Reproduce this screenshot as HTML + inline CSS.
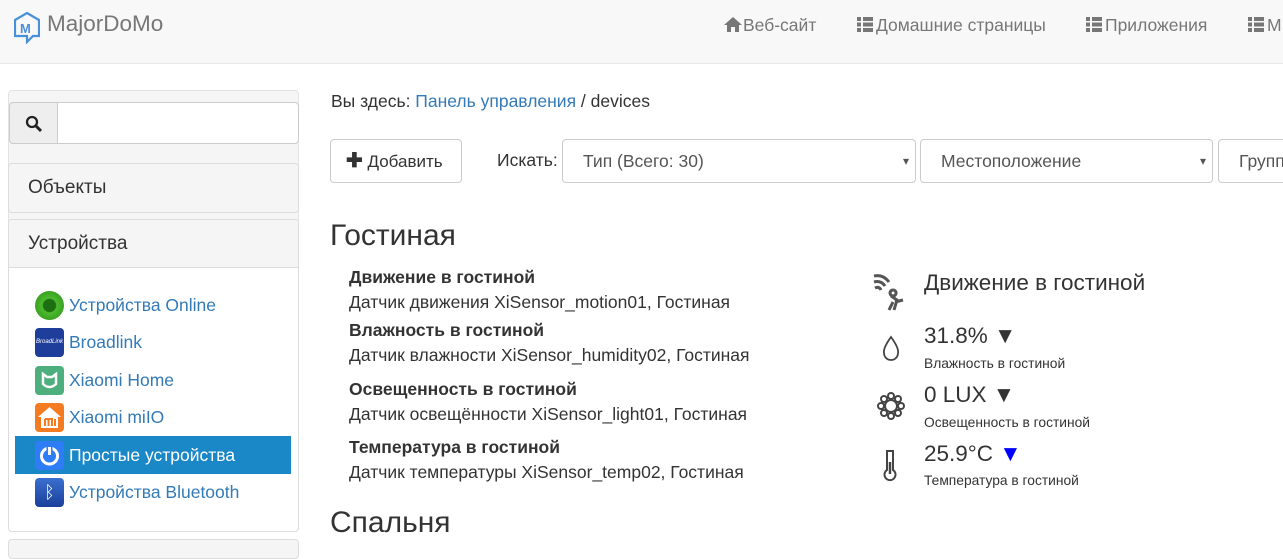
<!DOCTYPE html>
<html><head><meta charset="utf-8"><style>
*{box-sizing:border-box}
body{margin:0;width:1283px;height:543px;overflow:hidden;font-family:"Liberation Sans",sans-serif;color:#333;background:#fff;position:relative;font-size:17.5px}
.a{position:absolute;white-space:nowrap}
.nav{position:absolute;left:0;top:0;width:1283px;height:64px;background:#f8f8f8;border-bottom:1px solid #e7e7e7}
.nav .l{color:#777;font-size:17.5px;top:15px}
.nav .l b{display:inline-block;width:16px;height:15px;vertical-align:-1px;margin-right:3px;background:repeating-linear-gradient(#777 0 4px,transparent 4px 5.5px)}
.nav .l b:before{content:"";display:block;width:2px;height:15px;margin-left:4px;background:#f8f8f8}
.panel{position:absolute;border:1px solid #ddd;border-radius:4px}
.item{position:absolute;left:15px;width:276px;height:38px;color:#337ab7;font-size:17.5px;line-height:38px;padding-left:54px}
.ic{position:absolute;left:20px;top:5px;width:29px;height:29px;border-radius:4px}
.sel{border:1px solid #ccc;border-radius:4px;position:absolute;top:139px;height:44px;font-size:17.5px;line-height:42px;padding-left:20px;color:#555}
.sel:after{content:"▾";position:absolute;right:6px;top:0;font-size:12px}
.b{font-weight:bold;font-size:17.5px}
.t{font-size:17.5px}
</style></head><body>
<div class="nav">
<svg class="a" style="left:14px;top:12px" width="26" height="32" viewBox="0 0 26 32"><path d="M13 1 L25 8 V24 H19 L13 30 V24 H1 V8 Z" fill="none" stroke="#4a90d9" stroke-width="2.2"/><text x="6" y="21" font-family="Liberation Sans" font-weight="bold" font-size="13" fill="#4a90d9">M</text></svg>
<div class="a" style="left:47px;top:11px;font-size:22.5px;color:#777">MajorDoMo</div>
<div class="a l" style="left:723px"><svg width="20" height="16" style="vertical-align:-1px"><path d="M10 1 L19 9 H16 V16 H12 V11 H8 V16 H4 V9 H1 Z" fill="#777"/></svg>Веб-сайт</div>
<div class="a l" style="left:857px"><b></b>Домашние страницы</div>
<div class="a l" style="left:1086px"><b></b>Приложения</div>
<div class="a l" style="left:1248px"><b></b>М</div>
</div>
<div class="panel" style="left:8px;top:90px;width:291px;height:442px;background:#f5f5f5;border-color:#e3e3e3"></div>
<div class="a" style="left:9px;top:102px;width:290px;height:42px;border:1px solid #ccc;border-radius:4px;background:#fff"></div>
<div class="a" style="left:9px;top:102px;width:49px;height:42px;border:1px solid #ccc;border-radius:4px 0 0 4px;background:#eee"><svg style="position:absolute;left:15px;top:12px" width="18" height="18"><circle cx="7" cy="7" r="5" fill="none" stroke="#222" stroke-width="2.3"/><path d="M11 11 L16 16" stroke="#222" stroke-width="3"/></svg></div>
<div class="panel" style="left:8px;top:163px;width:291px;height:50px;background:#f5f5f5"><div class="a" style="left:19px;top:13px;font-size:19px">Объекты</div></div>
<div class="panel" style="left:8px;top:219px;width:291px;height:313px;background:#fff"></div>
<div class="a" style="left:9px;top:220px;width:289px;height:48px;background:#f5f5f5;border-bottom:1px solid #ddd;border-radius:4px 4px 0 0"><div class="a" style="left:19px;top:13px;font-size:19px">Устройства</div></div>
<div class="item" style="top:286px"><div class="ic" style="border-radius:50%;background:radial-gradient(circle,#1d6e12 30%,#4cba2e 35%,#2a8c17 100%)"></div>Устройства Online</div>
<div class="item" style="top:323px"><div class="ic" style="background:#1f3d9a;color:#fff;font-size:6px;line-height:29px;text-align:center;font-style:italic">BroadLink</div>Broadlink</div>
<div class="item" style="top:361px"><div class="ic" style="background:#4caf7d"><svg width="29" height="29"><path d="M8 8 V18 Q14.5 24 21 18 V8 L17 11 H12 Z" fill="none" stroke="#fff" stroke-width="2.5"/></svg></div>Xiaomi Home</div>
<div class="item" style="top:398px"><div class="ic" style="background:#f57b22"><svg width="29" height="29"><path d="M14.5 4 L26 14 H23 V25 H6 V14 H3 Z" fill="#fff"/><path d="M10 16 H17 V23 M13.5 17 V23 M20 16 V23 M10 16 V23" stroke="#f57b22" stroke-width="2" fill="none"/></svg></div>Xiaomi miIO</div>
<div class="item" style="top:436px;background:#1a87c7;color:#fff"><div class="ic" style="background:#2e7cf6"><svg width="29" height="29"><circle cx="14.5" cy="15" r="8" fill="none" stroke="#fff" stroke-width="3"/><path d="M14.5 5 V14" stroke="#2e7cf6" stroke-width="6"/><path d="M14.5 6 V14" stroke="#fff" stroke-width="3"/></svg></div>Простые устройства</div>
<div class="item" style="top:473px"><div class="ic" style="background:linear-gradient(#3b6fd0,#1a3f9a);color:#fff;text-align:center;line-height:29px">ᛒ</div>Устройства Bluetooth</div>
<div class="panel" style="left:8px;top:539px;width:291px;height:20px;background:#f5f5f5"></div>

<div class="a" style="left:331px;top:91px">Вы здесь: <span style="color:#337ab7">Панель управления</span> / devices</div>
<div class="a" style="left:330px;top:139px;width:132px;height:44px;border:1px solid #ccc;border-radius:4px;line-height:42px;padding-left:15px;font-size:17px"><b style="font-size:20px">✚</b> Добавить</div>
<div class="a" style="left:497px;top:150px">Искать:</div>
<div class="sel" style="left:562px;width:354px">Тип (Всего: 30)</div>
<div class="sel" style="left:920px;width:293px">Местоположение</div>
<div class="sel" style="left:1218px;width:80px">Группы</div>

<div class="a" style="left:330px;top:219px;font-size:30px">Гостиная</div>
<div class="a b" style="left:349px;top:267px">Движение в гостиной</div>
<div class="a t" style="left:349px;top:292px">Датчик движения XiSensor_motion01, Гостиная</div>
<div class="a b" style="left:349px;top:320px">Влажность в гостиной</div>
<div class="a t" style="left:349px;top:345px">Датчик влажности XiSensor_humidity02, Гостиная</div>
<div class="a b" style="left:349px;top:379px">Освещенность в гостиной</div>
<div class="a t" style="left:349px;top:404px">Датчик освещённости XiSensor_light01, Гостиная</div>
<div class="a b" style="left:349px;top:437px">Температура в гостиной</div>
<div class="a t" style="left:349px;top:462px">Датчик температуры XiSensor_temp02, Гостиная</div>
<div class="a" style="left:330px;top:506px;font-size:30px">Спальня</div>

<svg class="a" style="left:871px;top:272px" width="42" height="42"><path d="M3 4 Q12 2 18 10 M3 10 Q10 8 14 14 M4 16 Q8 14 10 18 M22 18 a3 3 0 1 0 .1 0 M20 24 L26 28 L23 38 M24 30 L32 28 M22 30 L18 38" fill="none" stroke="#555" stroke-width="3"/></svg>
<div class="a" style="left:924px;top:270px;font-size:22.5px">Движение в гостиной</div>
<svg class="a" style="left:881px;top:334px" width="20" height="28"><path d="M10 3 Q2 14 3 19 A7 7 0 0 0 17 19 Q18 14 10 3Z" fill="none" stroke="#444" stroke-width="1.8"/></svg>
<div class="a" style="left:924px;top:323px;font-size:22.5px">31.8% ▼</div>
<div class="a" style="left:924px;top:356px;font-size:13.8px">Влажность в гостиной</div>
<svg class="a" style="left:876px;top:391px" width="30" height="30"><circle cx="15" cy="15" r="6" fill="none" stroke="#444" stroke-width="2"/><g fill="none" stroke="#444" stroke-width="2"><circle cx="15" cy="5" r="3"/><circle cx="15" cy="25" r="3"/><circle cx="5" cy="15" r="3"/><circle cx="25" cy="15" r="3"/><circle cx="8" cy="8" r="3"/><circle cx="22" cy="8" r="3"/><circle cx="8" cy="22" r="3"/><circle cx="22" cy="22" r="3"/></g></svg>
<div class="a" style="left:924px;top:382px;font-size:22.5px">0 LUX ▼</div>
<div class="a" style="left:924px;top:415px;font-size:13.8px">Освещенность в гостиной</div>
<svg class="a" style="left:882px;top:448px" width="16" height="34"><path d="M5 3 H11 V22 A5.5 5.5 0 1 1 5 22 Z" fill="none" stroke="#444" stroke-width="2"/><path d="M8 14 V26" stroke="#444" stroke-width="2.5"/></svg>
<div class="a" style="left:924px;top:441px;font-size:22.5px">25.9°C <span style="color:#00f">▼</span></div>
<div class="a" style="left:924px;top:473px;font-size:13.8px">Температура в гостиной</div>
</body></html>
